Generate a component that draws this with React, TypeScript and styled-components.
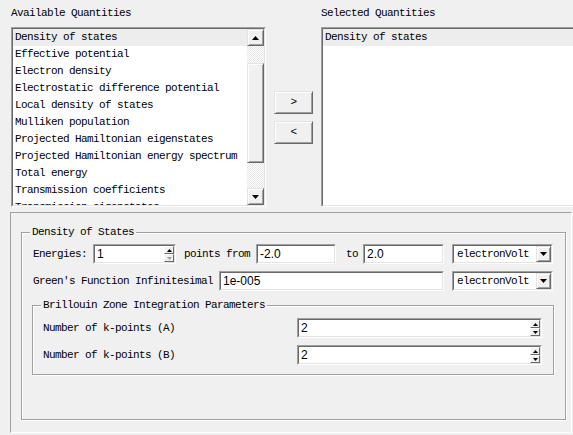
import styled, { createGlobalStyle, css } from 'styled-components';

const GlobalStyle = createGlobalStyle`
  html, body { margin: 0; padding: 0; }
  body {
    width: 573px;
    height: 435px;
    overflow: hidden;
    background: #f0f0f0;
    color: #000;
    font-family: "Liberation Mono", "DejaVu Sans Mono", monospace;
    font-size: 11px;
    letter-spacing: -0.6px;
  }
`;

const raised = css`
  box-sizing: border-box;
  border: 1px solid;
  border-color: #e3e3e3 #696969 #696969 #e3e3e3;
  box-shadow: inset 1px 1px 0 #fff, inset -1px -1px 0 #a0a0a0;
  background: #f0f0f0;
`;

const Top = styled.div`
  display: flex;
  gap: 8px;
  padding: 5px 0 0 11px;
`;

const Column = styled.div<{ $w: number }>`
  width: ${(p) => p.$w}px;
  flex: none;
`;

const Caption = styled.div`
  line-height: 17px;
  margin-bottom: 5px;
  white-space: nowrap;
`;

// sunken 2px frame, outer half
const Outer = styled.div<{ $w: number; $h?: number; $ml?: number }>`
  box-sizing: border-box;
  flex: none;
  width: ${(p) => p.$w}px;
  height: ${(p) => p.$h ?? 20}px;
  margin-left: ${(p) => p.$ml ?? 0}px;
  border: 1px solid;
  border-color: #a0a0a0 #fff #fff #a0a0a0;
`;

const Well = styled.div`
  box-sizing: border-box;
  height: 100%;
  border: 1px solid;
  border-color: #696969 #e3e3e3 #e3e3e3 #696969;
  background: #fff;
  display: flex;
  align-items: stretch;
  overflow: hidden;
`;

const Items = styled.div`
  flex: 1;
  min-width: 0;
  overflow: hidden;
`;

const Item = styled.div<{ $sel?: boolean }>`
  height: 17px;
  line-height: 17px;
  padding-left: 2px;
  white-space: nowrap;
  background: ${(p) => (p.$sel ? '#ededed' : 'transparent')};
`;

const ScrollBar = styled.div`
  width: 17px;
  flex: none;
  display: flex;
  flex-direction: column;
  background: repeating-conic-gradient(#fff 0 25%, #e6e6e6 0 50%) 0 0 / 2px 2px;
`;

const ScrollArrow = styled.div`
  ${raised};
  height: 17px;
  flex: none;
  display: flex;
  align-items: center;
  justify-content: center;
`;

const Thumb = styled.div`
  ${raised};
  height: 100px;
  flex: none;
  margin: 17px 0 auto;
`;

const Movers = styled.div`
  width: 39px;
  flex: none;
  margin-top: 22px;
  height: 180px;
  display: flex;
  flex-direction: column;
  justify-content: center;
  gap: 7px;
`;

const MoveBtn = styled.div`
  ${raised};
  height: 23px;
  display: flex;
  align-items: center;
  justify-content: center;
`;

const Panel = styled.div`
  box-sizing: border-box;
  width: 562px;
  height: 221px;
  margin: 5px 0 0 10px;
  border: 1px solid;
  border-color: #a0a0a0 #fff #fff #a0a0a0;
  display: flex;
  flex-direction: column;
  padding: 0 5px 12px 10px;
`;

const Group = styled.fieldset<{ $main?: boolean }>`
  margin: ${(p) => (p.$main ? '12px 0 0' : '0')};
  min-width: 0;
  padding: ${(p) => (p.$main ? '5px 11px 0 10px' : '6px 11px 9px 10px')};
  border: 1px solid #a0a0a0;
  box-shadow: 1px 1px 0 #fff, inset 1px 1px 0 #fff;
  display: flex;
  flex-direction: column;
  gap: 7px;
  ${(p) => p.$main && 'flex: 1;'}
`;

const Legend = styled.legend`
  padding: 0 2px;
  margin-left: -2px;
  line-height: 14px;
  background: #f0f0f0;
  white-space: nowrap;
`;

const Row = styled.div<{ $pl?: number }>`
  display: flex;
  align-items: center;
  height: 20px;
  padding-left: ${(p) => p.$pl ?? 0}px;
`;

const Label = styled.span<{ $w: number; $pl?: number }>`
  box-sizing: border-box;
  flex: none;
  width: ${(p) => p.$w}px;
  padding-left: ${(p) => p.$pl ?? 0}px;
  white-space: nowrap;
`;

const Value = styled.span`
  flex: 1;
  min-width: 0;
  align-self: center;
  padding-left: 2px;
  font-family: "Liberation Sans", Arial, sans-serif;
  font-size: 12px;
  letter-spacing: 0;
  white-space: nowrap;
`;

const ComboText = styled.span`
  flex: 1;
  align-self: center;
  padding-left: 3px;
  white-space: nowrap;
`;

const ComboBtn = styled.div`
  ${raised};
  width: 15px;
  flex: none;
  display: flex;
  align-items: center;
  justify-content: center;
`;

const SpinCol = styled.div`
  width: 10px;
  flex: none;
  display: flex;
  flex-direction: column;
`;

const SpinBtn = styled.div`
  flex: 1;
  box-sizing: border-box;
  border: 1px solid;
  border-color: #fff #696969 #696969 #fff;
  background: #f0f0f0;
  display: flex;
  align-items: center;
  justify-content: center;
`;

const Tri = styled.svg`
  display: block;
`;

function Arrow({ dir, w = 7, color = '#000' }: { dir: 'up' | 'down'; w?: number; color?: string }) {
  const h = Math.ceil(w / 2);
  const pts = dir === 'up' ? `0,${h} ${w},${h} ${w / 2},0` : `0,0 ${w},0 ${w / 2},${h}`;
  return (
    <Tri width={w} height={h} viewBox={`0 0 ${w} ${h}`}>
      <polygon points={pts} fill={color} />
    </Tri>
  );
}

function Spin({ w, value, downOff }: { w: number; value: string; downOff?: boolean }) {
  return (
    <Outer $w={w}>
      <Well>
        <Value>{value}</Value>
        <SpinCol>
          <SpinBtn>
            <Arrow dir="up" w={5} />
          </SpinBtn>
          <SpinBtn>
            <Arrow dir="down" w={5} color={downOff ? '#a0a0a0' : '#000'} />
          </SpinBtn>
        </SpinCol>
      </Well>
    </Outer>
  );
}

function Field({ w, value }: { w: number; value: string }) {
  return (
    <Outer $w={w}>
      <Well>
        <Value>{value}</Value>
      </Well>
    </Outer>
  );
}

function Combo({ value }: { value: string }) {
  return (
    <Outer $w={101} $ml={8}>
      <Well>
        <ComboText>{value}</ComboText>
        <ComboBtn>
          <Arrow dir="down" />
        </ComboBtn>
      </Well>
    </Outer>
  );
}

const available = [
  'Density of states',
  'Effective potential',
  'Electron density',
  'Electrostatic difference potential',
  'Local density of states',
  'Mulliken population',
  'Projected Hamiltonian eigenstates',
  'Projected Hamiltonian energy spectrum',
  'Total energy',
  'Transmission coefficients',
  'Transmission eigenstates',
];

export default function App() {
  return (
    <>
      <GlobalStyle />
      <Top>
        <Column $w={255}>
          <Caption>Available Quantities</Caption>
          <Outer $w={255} $h={180}>
            <Well>
              <Items>
                {available.map((name, i) => (
                  <Item key={name} $sel={i === 0}>
                    {name}
                  </Item>
                ))}
              </Items>
              <ScrollBar>
                <ScrollArrow>
                  <Arrow dir="up" />
                </ScrollArrow>
                <Thumb />
                <ScrollArrow>
                  <Arrow dir="down" />
                </ScrollArrow>
              </ScrollBar>
            </Well>
          </Outer>
        </Column>
        <Movers>
          <MoveBtn>&gt;</MoveBtn>
          <MoveBtn>&lt;</MoveBtn>
        </Movers>
        <Column $w={262}>
          <Caption>Selected Quantities</Caption>
          <Outer $w={262} $h={180}>
            <Well>
              <Items>
                <Item $sel>Density of states</Item>
              </Items>
            </Well>
          </Outer>
        </Column>
      </Top>

      <Panel>
        <Group $main>
          <Legend>Density of States</Legend>
          <Row $pl={1}>
            <Label $w={60}>Energies:</Label>
            <Spin w={83} value="1" downOff />
            <Label $w={80} $pl={8}>points from</Label>
            <Field w={80} value="-2.0" />
            <Label $w={27} $pl={10}>to</Label>
            <Field w={81} value="2.0" />
            <Combo value="electronVolt" />
          </Row>
          <Row $pl={1}>
            <Label $w={186}>Green's Function Infinitesimal</Label>
            <Field w={225} value="1e-005" />
            <Combo value="electronVolt" />
          </Row>
          <Group>
            <Legend>Brillouin Zone Integration Parameters</Legend>
            <Row>
              <Label $w={254}>Number of k-points (A)</Label>
              <Spin w={245} value="2" />
            </Row>
            <Row>
              <Label $w={254}>Number of k-points (B)</Label>
              <Spin w={245} value="2" />
            </Row>
          </Group>
        </Group>
      </Panel>
    </>
  );
}
